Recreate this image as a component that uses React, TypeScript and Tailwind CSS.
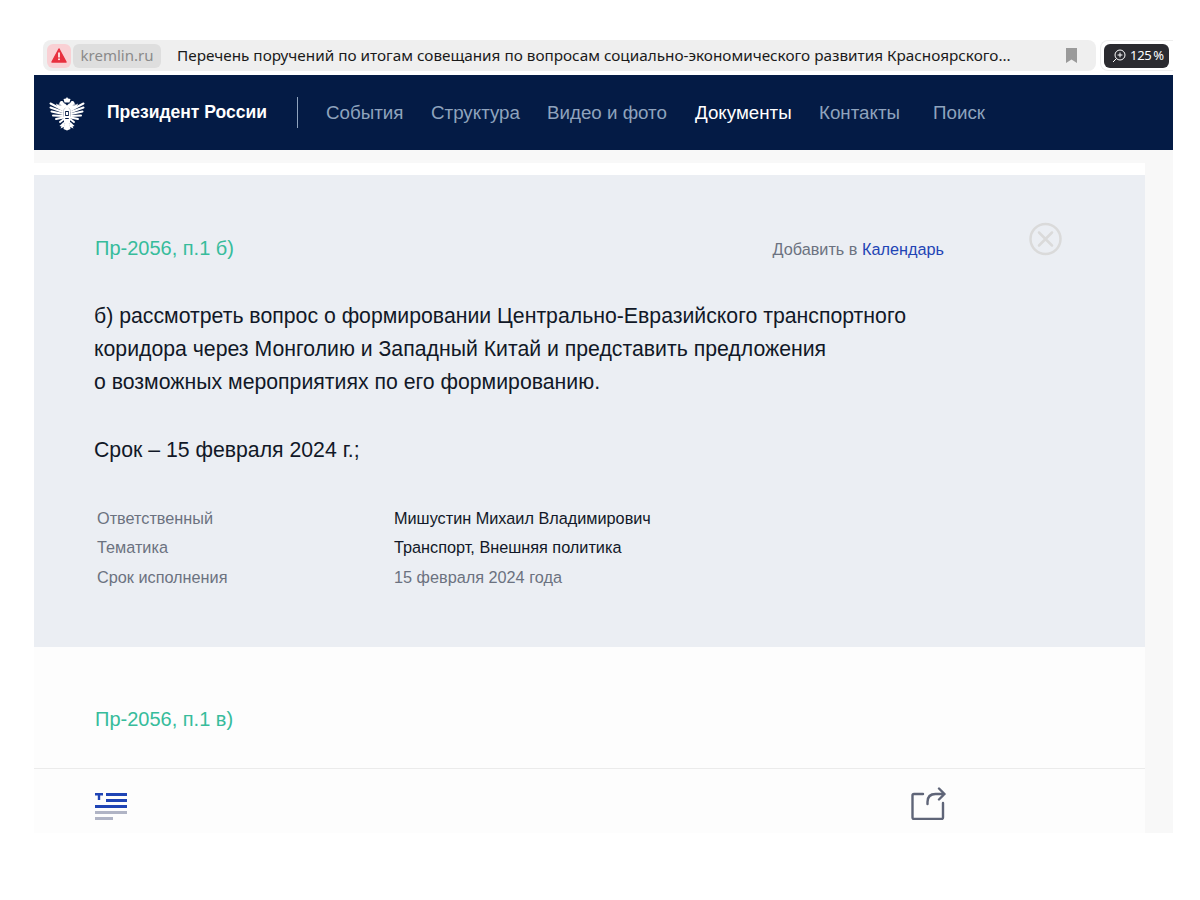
const feathers = [
  "M14 15 1.5 8.5",
  "M14 17 1.5 12.5",
  "M14 19 2.5 16.5",
  "M14 21 4 20.5",
  "M14.5 22.5 7 24",
  "M15 24 11 27",
];

function Wing() {
  return (
    <g>
      <path d="M15 14C11 14 8 12.5 7 8.5L9.5 10C11 10.5 13 9.5 15 11Z" fill="#fff" />
      <g stroke="#fff" strokeWidth="2" strokeLinecap="round" fill="none">
        {feathers.map((d) => (
          <path key={d} d={d} />
        ))}
      </g>
      <path d="M14 6.5C12 5.5 10.5 6.5 10.5 8.5L9 9.5 11.5 9.8C12.5 10.8 14 11.5 15.5 14L17 12C16 10 15 8.500 14 6.500Z" fill="#fff" />
      <path d="M14.5 27 10.5 31 12.5 31.5 11.5 33.5 15 32 16 29Z" fill="#fff" />
    </g>
  );
}

export default function App() {
  const nav = [
    ["События", "text-[#8fa3bd]", "w-[105px]"],
    ["Структура", "text-[#8fa3bd]", "w-[116px]"],
    ["Видео и фото", "text-[#8fa3bd]", "w-[148px]"],
    ["Документы", "text-white font-medium", "w-[124px]"],
    ["Контакты", "text-[#8fa3bd]", "w-[114px]"],
    ["Поиск", "text-[#8fa3bd]", "w-[60px]"],
  ];
  const meta = [
    ["Ответственный", "Мишустин Михаил Владимирович", "text-[#111827]"],
    ["Тематика", "Транспорт, Внешняя политика", "text-[#111827]"],
    ["Срок исполнения", "15 февраля 2024 года", "text-[#6b7280]"],
  ];
  return (
    <div className="w-[1200px] h-[900px] bg-white overflow-hidden pt-[40px] pl-[34px] font-['Liberation_Sans',sans-serif]">
      <div className="w-[1139px]">
        <div className="flex h-[35px]">
          <div className="ml-[9px] w-[1053px] h-[31px] bg-[#efefef] rounded-[8px] flex items-center pl-[4px]">
            <div className="w-[24px] h-[24px] rounded-[6px] bg-[#f9d0d4] flex items-center justify-center">
              <svg width="16" height="15" viewBox="0 0 16 15"><path d="M8 1 15 14H1Z" fill="#e8303f" stroke="#e8303f" strokeWidth="1.5" strokeLinejoin="round" /><rect x="7.2" y="4.5" width="1.6" height="5" fill="#fff" /><rect x="7.2" y="10.5" width="1.6" height="1.6" fill="#fff" /></svg>
            </div>
            <div className="ml-[2px] w-[88px] h-[24px] rounded-[6px] bg-[#dedede] flex items-center justify-center text-[15px] text-[#8a8a8a] font-['Noto_Sans',sans-serif]">kremlin.ru</div>
            <div className="ml-[16px] w-[860px] whitespace-nowrap text-[15.3px] text-[#1a1a1a] font-['Noto_Sans',sans-serif]">Перечень поручений по итогам совещания по вопросам социально-экономического развития Красноярского...</div>
            <svg className="ml-[29px]" width="11" height="15" viewBox="0 0 11 15"><path d="M0 0H11V15L5.5 11.5 0 15Z" fill="#9a9a9a" /></svg>
          </div>
          <div className="ml-[4px] w-[73px] h-[31px] border border-[#eeeeee] border-r-0 rounded-l-[8px] pl-[3px] pt-[3px]">
            <div className="w-[65px] h-[24px] bg-[#2b2b30] rounded-[6px] flex items-center pl-[8px] text-white">
              <svg width="14" height="14" viewBox="0 0 14 14" fill="none" stroke="#fff" strokeWidth="1"><circle cx="8" cy="6" r="5" /><path d="M4.5 9.5 1 13M8 3.6V8.4M5.6 6H10.4" /></svg>
              <span className="ml-[4px] text-[13px] tracking-[-0.3px] font-['Noto_Sans',sans-serif]">125&#8201;%</span>
            </div>
          </div>
        </div>
        <header className="h-[75px] bg-[#041b45] flex items-center">
          <svg className="ml-[15px]" width="36" height="36" viewBox="0 0 36 36" fill="#fff">
            <path d="M18 2 19 3.5 21.5 4 20.5 7.5H15.5L14.5 4 17 3.5Z" />
            <path d="M13.5 8.5H16L18 10.5 20 8.5H22.5L19.5 13H16.5Z" />
            <Wing />
            <g transform="translate(36 0) scale(-1 1)">
              <Wing />
            </g>
            <rect x="15" y="13" width="6" height="16" rx="1.5" />
            <rect x="16.2" y="16" width="3.6" height="5" fill="#041b45" />
            <rect x="17" y="17" width="2" height="3" />
            <rect x="16.2" y="23" width="3.6" height="1" fill="#041b45" />
            <path d="M15.5 29H20.5L21.5 34 18 35.5 14.5 34Z" />
          </svg>
          <div className="ml-[22px] w-[190px] text-white text-[17.5px] font-bold whitespace-nowrap">Президент России</div>
          <div className="w-px h-[31px] bg-[#8fa3bd]"></div>
          <nav className="ml-[28px] mt-[2px] flex text-[18.75px]">
            {nav.map(([t, c, w]) => (
              <div key={t} className={`${c} ${w} whitespace-nowrap`}>{t}</div>
            ))}
          </nav>
        </header>
        <div className="flex bg-[#f8f8f8]">
          <main className="w-[1111px] pt-[13px]">
            <div className="bg-white h-[12px]" />
            <section className="h-[472px] bg-[#ebeef3] pl-[60px] pt-[61px] relative">
              <div className="flex items-center h-[24px] w-[850px] justify-between">
                <span className="ml-[1px] text-[20px] text-[#37bc9b]">Пр-2056, п.1 б)</span>
                <span className="text-[16.25px] text-[#6b7280] mt-[3px]">Добавить в <span className="text-[#1f44b5]">Календарь</span></span>
              </div>
              <svg className="absolute left-[995px] top-[47px]" width="34" height="34" viewBox="0 0 34 34" fill="none" stroke="#dadada" strokeWidth="2.5" strokeLinecap="round"><circle cx="16.5" cy="17" r="15" /><path d="M10 10.500 23 23.500M23 10.500 10 23.500" /></svg>
              <div className="mt-[40px] text-[21.25px] leading-[33px] text-[#111827] whitespace-nowrap">
                <p>б) рассмотреть вопрос о формировании Центрально-Евразийского транспортного</p>
                <p>коридора через Монголию и Западный Китай и представить предложения</p>
                <p>о возможных мероприятиях по его формированию.</p>
                <p className="mt-[35px]">Срок – 15 февраля 2024 г.;</p>
              </div>
              <div className="mt-[36px] ml-[3px] text-[16.25px]">
                {meta.map(([a, b, c]) => (
                  <div key={a} className="flex h-[29.5px] items-center">
                    <div className="w-[297px] text-[#6b7280]">{a}</div>
                    <div className={c}>{b}</div>
                  </div>
                ))}
              </div>
            </section>
            <section className="h-[122px] bg-[#fdfdfd] border-b border-[#ebebeb] pl-[61px] pt-[57px]">
              <span className="text-[20px] text-[#37bc9b]">Пр-2056, п.1 в)</span>
            </section>
            <div className="h-[64px] bg-[#fdfdfd] flex justify-between pl-[61px] pr-[199px] pt-[20px]">
              <svg width="32" height="32" viewBox="0 0 32 32">
                <path d="M0 4h8v2.500H5.200V11H2.800V6.500H0z" fill="#1f44b5" />
                <rect x="11" y="4" width="21" height="3" fill="#1f44b5" />
                <rect x="11" y="10" width="21" height="3" fill="#1f44b5" />
                <rect y="16" width="32" height="3" fill="#1f44b5" />
                <rect y="22" width="32" height="3" fill="#b0b4c5" />
                <rect y="28" width="18" height="3" fill="#b0b4c5" />
              </svg>
              <svg className="-mt-[3px]" width="36" height="34" viewBox="0 0 36 34" fill="none" stroke="#5f6578" strokeWidth="2.4" strokeLinecap="round" strokeLinejoin="round">
                <path d="M13 8H4Q2.500 8 2.500 9.500V31.500Q2.500 33 4 33H31.500Q33 33 33 31.500V17" />
                <path d="M17.500 18V16C17.500 11 20.500 8 25.500 8H34.500M29 2.500 34.500 8 29 13.500" />
              </svg>
            </div>
          </main>
          <div className="w-[28px]" />
        </div>
      </div>
    </div>
  );
}
